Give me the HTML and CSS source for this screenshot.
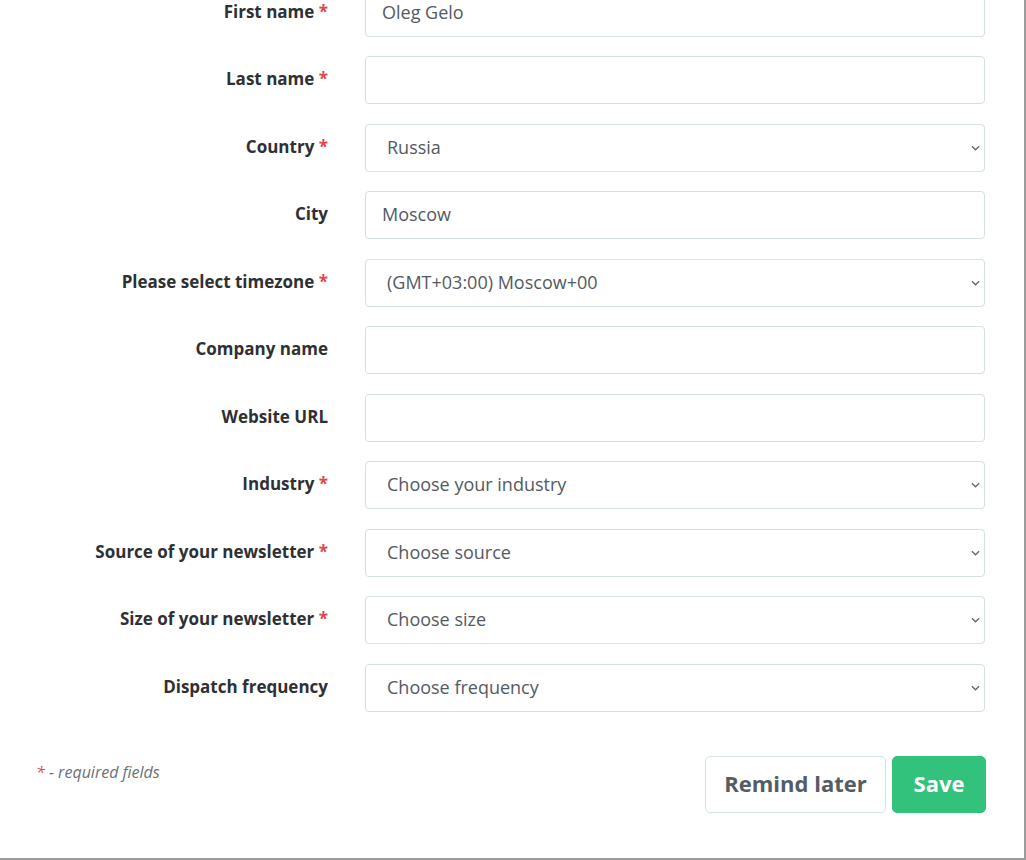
FILE: index.html
```html
<!DOCTYPE html>
<html lang="en">
<head>
<meta charset="utf-8">
<title>Profile</title>
<link rel="stylesheet" href="styles.css">
</head>
<body>
<div class="page">
  <form class="form">
    <div class="row">
      <label class="label">First name <span class="req">*</span></label>
      <input class="control" type="text" value="Oleg Gelo">
    </div>
    <div class="row">
      <label class="label">Last name <span class="req">*</span></label>
      <input class="control" type="text" value="">
    </div>
    <div class="row">
      <label class="label">Country <span class="req">*</span></label>
      <select class="control select"><option>Russia</option></select>
    </div>
    <div class="row">
      <label class="label">City</label>
      <input class="control" type="text" value="Moscow">
    </div>
    <div class="row">
      <label class="label">Please select timezone <span class="req">*</span></label>
      <select class="control select"><option>(GMT+03:00) Moscow+00</option></select>
    </div>
    <div class="row">
      <label class="label">Company name</label>
      <input class="control" type="text" value="">
    </div>
    <div class="row">
      <label class="label">Website URL</label>
      <input class="control" type="text" value="">
    </div>
    <div class="row">
      <label class="label">Industry <span class="req">*</span></label>
      <select class="control select"><option>Choose your industry</option></select>
    </div>
    <div class="row">
      <label class="label">Source of your newsletter <span class="req">*</span></label>
      <select class="control select"><option>Choose source</option></select>
    </div>
    <div class="row">
      <label class="label">Size of your newsletter <span class="req">*</span></label>
      <select class="control select"><option>Choose size</option></select>
    </div>
    <div class="row">
      <label class="label">Dispatch frequency</label>
      <select class="control select"><option>Choose frequency</option></select>
    </div>
    <div class="footer">
      <p class="note"><span class="req">*</span> - required fields</p>
      <div class="actions">
        <button type="button" class="btn btn-light">Remind later</button>
        <button type="button" class="btn btn-save">Save</button>
      </div>
    </div>
  </form>
</div>
</body>
</html>
```
FILE: styles.css
```css
html, body {
  margin: 0;
  padding: 0;
  background: #ffffff;
}
body {
  font-family: "Open Sans", "Noto Sans", "Liberation Sans", sans-serif;
  overflow: hidden;
}
.page {
  width: 1024px;
  height: 858px;
  border-right: 2px solid #9c9c9c;
  border-bottom: 2px solid #9c9c9c;
  overflow: hidden;
  background: #fff;
}
.form {
  margin-top: -11.5px;
  display: flex;
  flex-direction: column;
  gap: 19.5px;
}
.row {
  display: grid;
  grid-template-columns: 343px 620px;
  column-gap: 22px;
  align-items: center;
}
.label {
  text-align: right;
  padding-right: 15px;
  padding-bottom: 3px;
  font-size: 17px;
  font-weight: 700;
  color: #2f3033;
}
.req {
  color: #e0474c;
}
.control {
  box-sizing: border-box;
  height: 48px;
  width: 100%;
  border: 1px solid #d5e1e0;
  border-radius: 4px;
  background: #fff;
  font-family: inherit;
  font-size: 18px;
  color: #535a62;
  padding: 0 16px 2px 16px;
  outline: none;
}
.select {
  -webkit-appearance: none;
  appearance: none;
  padding-left: 21px;
  padding-right: 30px;
  background-image: url("data:image/svg+xml,%3Csvg xmlns='http://www.w3.org/2000/svg' width='10' height='6' viewBox='0 0 10 6'%3E%3Cpath d='M1 1l4 4 4-4' fill='none' stroke='%23666' stroke-width='1.4'/%3E%3C/svg%3E");
  background-repeat: no-repeat;
  background-position: right 4px center;
  background-size: 9px 6px;
}
.footer {
  display: flex;
  justify-content: space-between;
  align-items: flex-start;
  margin-top: 25px;
  padding-left: 36px;
  width: 950px;
}
.note {
  margin: 5px 0 0 0;
  font-size: 16px;
  font-style: italic;
  color: #6a7178;
}
.actions {
  display: flex;
  gap: 6px;
}
.btn {
  height: 57px;
  border-radius: 5px;
  font-family: inherit;
  font-size: 22px;
  font-weight: 700;
  padding: 0 0 3px 0;
  cursor: pointer;
}
.btn-light {
  width: 181px;
  background: #fff;
  border: 1px solid #d5e1e0;
  color: #555d64;
}
.btn-save {
  width: 94px;
  background: #33c27b;
  border: 1px solid #33c27b;
  color: #fff;
}
```
